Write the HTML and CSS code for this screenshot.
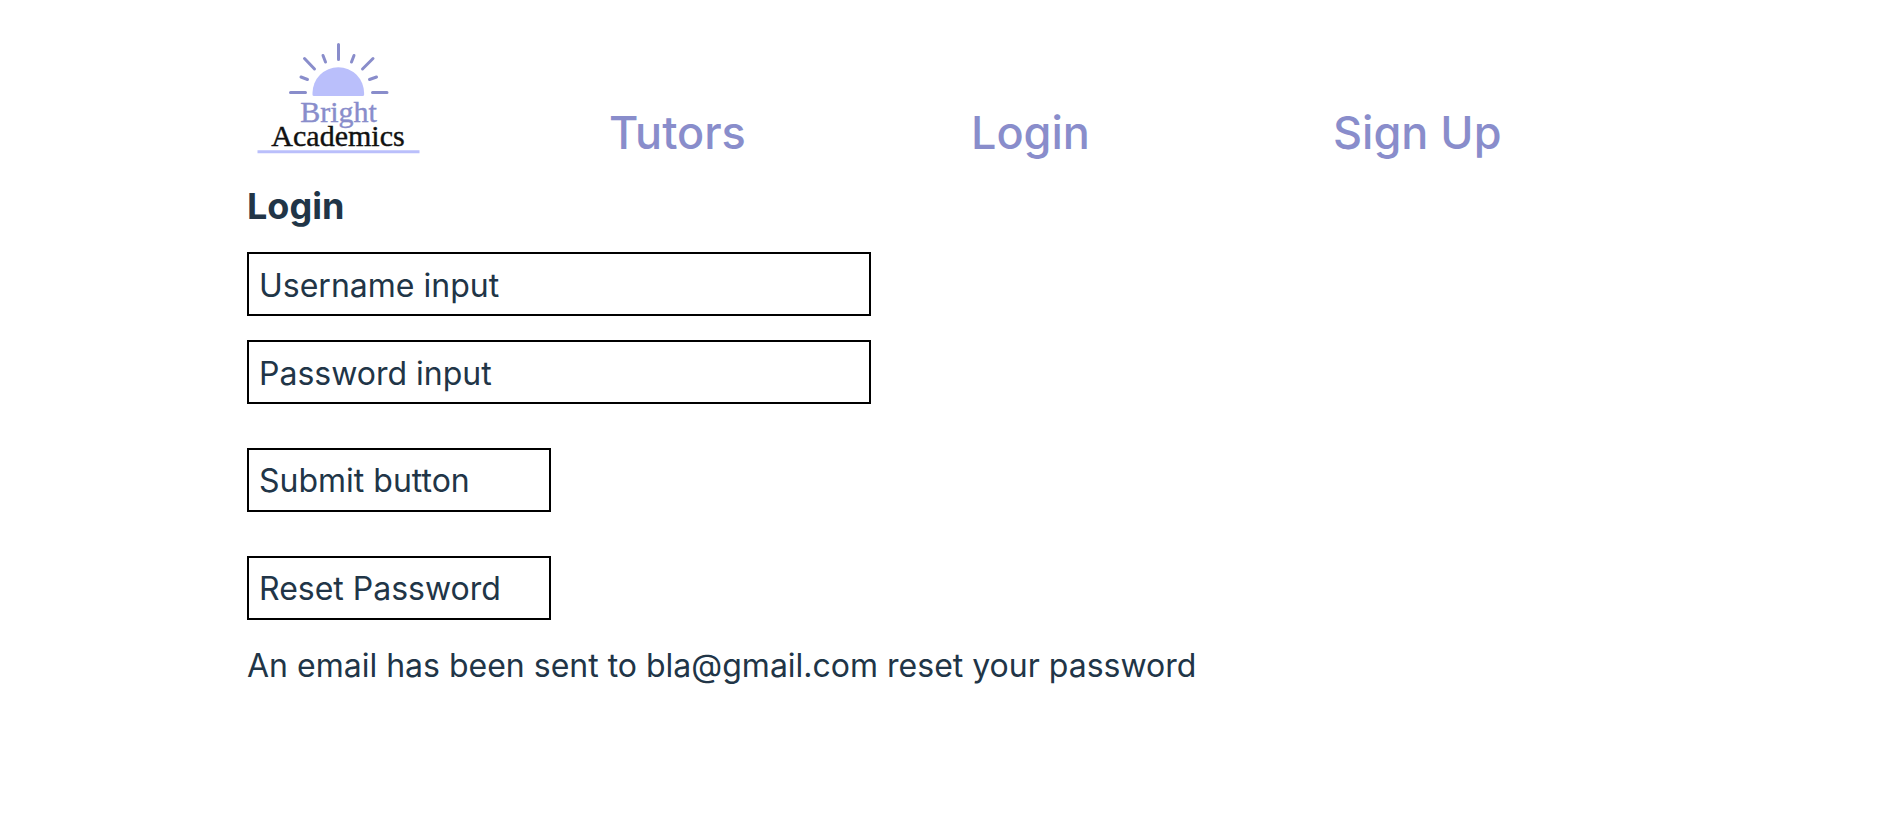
FILE: index.html
```html
<!DOCTYPE html>
<html lang="en">
<head>
<meta charset="utf-8">
<title>Bright Academics - Login</title>
<link rel="stylesheet" href="styles.css">
</head>
<body>
<div class="page">
  <nav class="nav">
    <a class="brand" href="#" aria-label="Bright Academics">
      <svg class="logo" width="180" height="120" viewBox="247 40 180 120">
        <path class="sun" d="M312.500 94.500V93a25.800 25.800 0 0 1 51.600 0v1.500a1.500 1.500 0 0 1-1.500 1.500H314a1.500 1.500 0 0 1-1.500-1.500z"/>
        <path class="rays" d="M338.500 44.500v15M304.500 58.500l10 10.500M373 58.500L362.500 69M323 55.500l2.500 6.500M354 55.500L351.500 62M301 77l6.500 2.500M376.500 77l-7 2.500M290.500 92.500h15M372.500 92.500h14.500"/>
        <text class="word word-bright" x="338.500" y="122" text-anchor="middle">Bright</text>
        <text class="word word-academics" x="338" y="146" text-anchor="middle">Academics</text>
        <path class="rule" d="M257.500 151.700h162"/>
      </svg>
    </a>
    <a class="nav-link" href="#">Tutors</a>
    <a class="nav-link" href="#">Login</a>
    <a class="nav-link" href="#">Sign Up</a>
  </nav>
  <main>
    <h1 class="title">Login</h1>
    <form class="form">
      <input class="field" type="text" placeholder="Username input" aria-label="Username">
      <input class="field" type="password" placeholder="Password input" aria-label="Password">
      <button class="action" type="button">Submit button</button>
      <button class="action" type="button">Reset Password</button>
    </form>
    <p class="message">An email has been sent to bla@gmail.com reset your password</p>
  </main>
</div>
</body>
</html>
```
FILE: styles.css
```css
* { box-sizing: border-box; }
body {
  margin: 0;
  background: #fff;
  color: #213547;
  font-family: Inter, "Liberation Sans", sans-serif;
  font-size: 32px;
  line-height: 48px;
}
.page { padding: 40px 187px 40px 247px; }
.nav {
  display: grid;
  grid-template-columns: repeat(4, 1fr);
  align-items: end;
}
.brand { display: block; height: 120px; }
.logo { display: block; }
.sun { fill: #babffb; }
.rays { fill: none; stroke: #898dcb; stroke-width: 3; stroke-linecap: round; }
.rule { stroke: #babffb; stroke-width: 3; }
.word { font-family: "Liberation Serif", serif; font-size: 30px; stroke-width: 0.400; }
.word-bright { fill: #898dcb; stroke: #898dcb; }
.word-academics { fill: #111; stroke: #111; }
.nav-link {
  color: #898dcb;
  font-size: 45px;
  font-weight: 500;
  line-height: 54px;
  text-decoration: none;
}
.title { margin: 22px 0; font-size: 36px; font-weight: 700; line-height: 48px; }
.form { display: flex; flex-direction: column; align-items: flex-start; }
.field, .action {
  height: 64px;
  max-width: 100%;
  padding: 2px 10px 0;
  border: 2px solid #000;
  border-radius: 0;
  background: #fff;
  color: inherit;
  font: inherit;
  text-align: left;
}
.field { width: 624px; }
.field::placeholder { color: inherit; opacity: 1; }
.field + .field { margin-top: 24px; }
.action { width: 304px; margin-top: 44px; white-space: nowrap; }
.message { margin: 22px 0 0; }
```
